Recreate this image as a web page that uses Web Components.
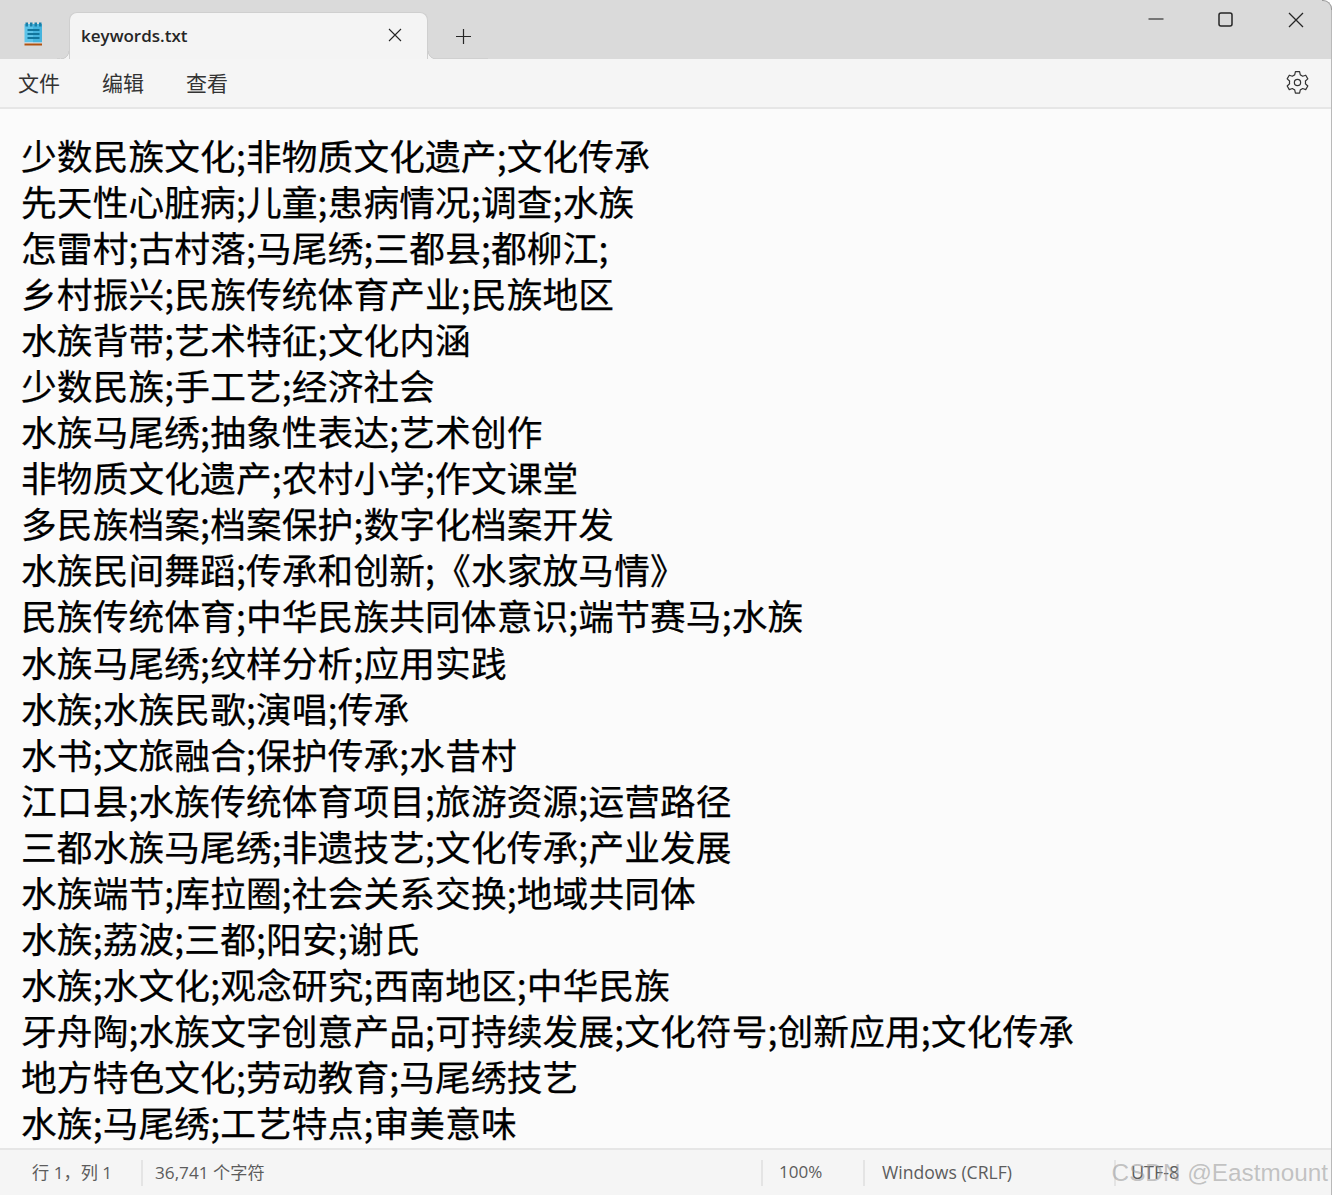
<!DOCTYPE html>
<html lang="zh">
<head>
<meta charset="utf-8">
<title>keywords.txt</title>
<style>
  html, body { margin: 0; padding: 0; background: #fff; }
  body { width: 1332px; height: 1195px; overflow: hidden; font-family: "Open Sans", "Noto Sans CJK SC", sans-serif; }
</style>
</head>
<body>
<notepad-window>
  <title-bar slot="title" name="keywords.txt"></title-bar>
  <menu-bar slot="menu"></menu-bar>
  <text-area slot="text"></text-area>
  <status-bar slot="status"></status-bar>
</notepad-window>

<script>
class NotepadWindow extends HTMLElement {
  constructor() {
    super();
    this.attachShadow({ mode: 'open' });
    this.shadowRoot.innerHTML = `
      <style>
        :host { display: flex; flex-direction: column; width: 1332px; height: 1195px; position: relative; overflow: hidden; background: #fbfbfb; }
        .corner { position: absolute; right: 0; width: 10px; height: 10px; pointer-events: none; }
        .tr { top: 0; border-top: 1px solid #9a9a9a; border-right: 1px solid #9a9a9a; border-top-right-radius: 9px; width: 9px; height: 9px; box-shadow: 3px -3px 0 3px #fff; }
        .edge { position: absolute; top: 9px; bottom: 0; right: 0; width: 1px; background: #b9b9b9; }
      </style>
      <slot name="title"></slot>
      <slot name="menu"></slot>
      <slot name="text"></slot>
      <slot name="status"></slot>
      <div class="edge"></div>
      <div class="corner tr"></div>
    `;
  }
}

class TitleBar extends HTMLElement {
  constructor() {
    super();
    this.attachShadow({ mode: 'open' });
    const name = this.getAttribute('name');
    this.shadowRoot.innerHTML = `
      <style>
        :host { display: flex; flex: none; height: 59px; background: #dadada; position: relative; }
        .logo { width: 69px; flex: none; display: flex; align-items: flex-start; padding-top: 22px; box-sizing: border-box; padding-left: 24px; }
        .tab { width: 359px; height: 47px; margin-top: 12px; box-sizing: border-box; background: #f4f4f4; border: 1px solid #cfcfcf; border-bottom: 0; border-radius: 8px 8px 0 0; display: flex; align-items: center; padding: 0 25px 0 11px; position: relative; }
        .tab::before, .tab::after { content: ""; position: absolute; bottom: 0; width: 8px; height: 8px; }
        .tab::before { left: -9px; background: radial-gradient(circle at 0 0, transparent 7px, #cfcfcf 7.5px, #cfcfcf 8px, #f4f4f4 8.5px); }
        .tab::after { right: -9px; background: radial-gradient(circle at 100% 0, transparent 7px, #cfcfcf 7.5px, #cfcfcf 8px, #f4f4f4 8.5px); }
        .name { flex: 1; font: 600 17px "Open Sans", sans-serif; color: #262626; margin-top: -2px; }
        .plus { width: 72px; display: flex; align-items: center; justify-content: center; flex: none; padding-top: 14px; box-sizing: border-box; margin-left: -1px; }
        .sep { position: absolute; left: 436px; width: 52px; bottom: 0; height: 1px; background: #d0d0d0; }
        .sep2 { position: absolute; left: 57px; width: 3px; bottom: 0; height: 1px; background: #d0d0d0; }
        .controls { margin-left: auto; display: flex; padding-top: 11px; height: 20px; margin-right: 1px; }
        .controls svg { display: block; }
        .controls span { width: 70px; display: flex; justify-content: center; }
        svg { fill: none; stroke: #262626; }
      </style>
      <div class="logo">
        <svg width="19" height="25" viewBox="0 0 19 25" style="stroke:none">
          <rect x="0.5" y="2" width="17.5" height="18.5" fill="#5cc3e8"/>
          <rect x="9" y="2" width="9" height="18.5" fill="#45b4de"/>
          <rect x="1.5" y="0.5" width="2.5" height="4" fill="#1a7fa8"/>
          <rect x="6" y="0.5" width="2.5" height="4" fill="#1a7fa8"/>
          <rect x="10.5" y="0.5" width="2.5" height="4" fill="#1a7fa8"/>
          <rect x="15" y="0.5" width="2.5" height="4" fill="#1a7fa8"/>
          <rect x="3.5" y="7" width="12" height="2" fill="#11759c"/>
          <rect x="3.5" y="11" width="12" height="2" fill="#11759c"/>
          <rect x="3.5" y="15" width="12" height="2" fill="#11759c"/>
          <rect x="0.5" y="20.5" width="17.5" height="1" fill="#e4e4e4"/>
          <rect x="0.5" y="21.5" width="17.5" height="2" fill="#b15210"/>
        </svg>
      </div>
      <div class="tab">
        <span class="name">${name}</span>
        <svg width="14" height="14" viewBox="0 0 14 14" stroke-width="1.1" style="margin-top:-2px"><path d="M1 1 L13 13 M13 1 L1 13"/></svg>
      </div>
      <div class="plus">
        <svg width="15" height="15" viewBox="0 0 15 15" stroke-width="1.2"><path d="M7.5 0 V15 M0 7.5 H15"/></svg>
      </div>
      <div class="controls">
        <span><svg width="16" height="16" viewBox="0 0 16 16" stroke-width="1.1"><path d="M0.5 8 H15.5"/></svg></span>
        <span><svg width="16" height="16" viewBox="0 0 16 16" stroke-width="1.5" style="margin-top:1px"><rect x="1" y="1" width="13" height="13" rx="2"/></svg></span>
        <span><svg width="16" height="16" viewBox="0 0 16 16" stroke-width="1.3" style="margin-top:1px"><path d="M1 1 L15 15 M15 1 L1 15"/></svg></span>
      </div>
      <div class="sep"></div>
      <div class="sep2"></div>
    `;
  }
}

class MenuBar extends HTMLElement {
  constructor() {
    super();
    this.attachShadow({ mode: 'open' });
    this.shadowRoot.innerHTML = `
      <style>
        :host { display: flex; flex: none; align-items: center; height: 50px; box-sizing: border-box; background: #f5f5f5; border-bottom: 2px solid #e6e6e6; padding: 0 22px 0 18px; font: 21px "Noto Sans CJK SC", sans-serif; color: #333; }
        span { width: 84px; line-height: 50px; margin-top: -2px; }
        svg { margin-left: auto; display: block; fill: none; stroke: #333; stroke-width: 1.15; margin-top: -1px; }
      </style>
      <span>文件</span><span>编辑</span><span>查看</span>
      <svg width="25" height="25" viewBox="0 0 24 24"><circle cx="12" cy="12" r="3"/><path d="M10 1.6 h4 l.7 3.1 a8 8 0 0 1 2.2 1.3 l3-1 2 3.5 -2.3 2.1 a8 8 0 0 1 0 2.6 l2.3 2.1 -2 3.5 -3-1 a8 8 0 0 1 -2.2 1.3 l-.7 3.1 h-4 l-.7-3.1 a8 8 0 0 1 -2.2-1.3 l-3 1 -2-3.5 2.3-2.1 a8 8 0 0 1 0-2.6 L2.1 8.5 l2-3.5 3 1 a8 8 0 0 1 2.2-1.3 z" stroke-linejoin="round"/></svg>
    `;
  }
}

const LINES = [
  '少数民族文化;非物质文化遗产;文化传承',
  '先天性心脏病;儿童;患病情况;调查;水族',
  '怎雷村;古村落;马尾绣;三都县;都柳江;',
  '乡村振兴;民族传统体育产业;民族地区',
  '水族背带;艺术特征;文化内涵',
  '少数民族;手工艺;经济社会',
  '水族马尾绣;抽象性表达;艺术创作',
  '非物质文化遗产;农村小学;作文课堂',
  '多民族档案;档案保护;数字化档案开发',
  '水族民间舞蹈;传承和创新;《水家放马情》',
  '民族传统体育;中华民族共同体意识;端节赛马;水族',
  '水族马尾绣;纹样分析;应用实践',
  '水族;水族民歌;演唱;传承',
  '水书;文旅融合;保护传承;水昔村',
  '江口县;水族传统体育项目;旅游资源;运营路径',
  '三都水族马尾绣;非遗技艺;文化传承;产业发展',
  '水族端节;库拉圈;社会关系交换;地域共同体',
  '水族;荔波;三都;阳安;谢氏',
  '水族;水文化;观念研究;西南地区;中华民族',
  '牙舟陶;水族文字创意产品;可持续发展;文化符号;创新应用;文化传承',
  '地方特色文化;劳动教育;马尾绣技艺',
  '水族;马尾绣;工艺特点;审美意味'
];

class TextArea extends HTMLElement {
  constructor() {
    super();
    this.attachShadow({ mode: 'open' });
    this.shadowRoot.innerHTML = `
      <style>
        :host { display: block; flex: 1; min-height: 0; overflow: hidden; background: #fbfbfb; padding: 23px 0 0 21px; box-sizing: border-box; color: #000; font: 35.7px/46.05px "Noto Sans CJK SC", sans-serif; letter-spacing: .13px; -webkit-text-stroke: .25px #000; }
        div { white-space: pre; height: 46.05px; }
      </style>
      ${LINES.map(l => `<div>${l}</div>`).join('')}
    `;
  }
}

class StatusBar extends HTMLElement {
  constructor() {
    super();
    this.attachShadow({ mode: 'open' });
    this.shadowRoot.innerHTML = `
      <style>
        :host { display: flex; flex: none; align-items: center; height: 47px; box-sizing: border-box; background: #f5f5f5; border-top: 2px solid #e6e6e6; color: #5c5c5c; font: 17.2px "Open Sans", "Noto Sans CJK SC", sans-serif; position: relative; }
        .cell { height: 26px; display: flex; align-items: center; box-sizing: border-box; white-space: nowrap; padding-bottom: 2px; }
        .a { width: 141px; padding-left: 32px; }
        .b { width: 620px; padding-left: 12px; border-left: 2px solid #e4e4e4; }
        .c { width: 102px; padding-left: 16px; border-left: 2px solid #e4e4e4; font-size: 17px; }
        .d { width: 251px; padding-left: 17px; border-left: 2px solid #e4e4e4; font-size: 17.6px; }
        .e { padding-left: 15px; border-left: 2px solid #e4e4e4; font-size: 18px; }
        .mark { position: absolute; right: 4px; top: 9px; font: 24.3px "Liberation Sans", sans-serif; color: rgba(150,150,150,.55); white-space: nowrap; }
      </style>
      <div class="cell a">行 1，列 1</div>
      <div class="cell b">36,741 个字符</div>
      <div class="cell c">100%</div>
      <div class="cell d">Windows (CRLF)</div>
      <div class="cell e">UTF-8</div>
      <div class="mark">CSDN @Eastmount</div>
    `;
  }
}

customElements.define('notepad-window', NotepadWindow);
customElements.define('title-bar', TitleBar);
customElements.define('menu-bar', MenuBar);
customElements.define('text-area', TextArea);
customElements.define('status-bar', StatusBar);
</script>
</body>
</html>
